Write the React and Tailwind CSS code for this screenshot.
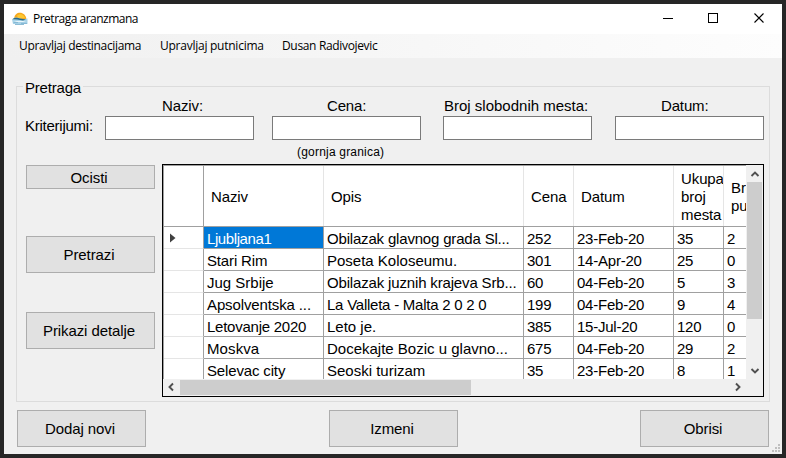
import React from "react";

const filters = [
  { label: "Naziv:", box: "ml-0", pad: "pl-[57px] tracking-[-0.1px]" },
  { label: "Cena:", box: "ml-[18px]", pad: "pl-[55px] tracking-[-0.15px]" },
  { label: "Broj slobodnih mesta:", box: "ml-[22px]", pad: "pl-[1px]" },
  { label: "Datum:", box: "ml-[23px]", pad: "pl-[46px] tracking-[-0.15px]" },
];

const columns = ["Naziv", "Opis", "Cena", "Datum", "Ukupan broj mesta", "Broj putnika"];

const rows = [
  { name: ["Ljubljana1", "tracking-[-0.4px]"], text: ["Obilazak glavnog grada Sl...", "tracking-[-0.18px]"], rest: ["252", "23-Feb-20", "35", "2"] },
  { name: ["Stari Rim", "tracking-[-0.15px]"], text: ["Poseta Koloseumu.", ""], rest: ["301", "14-Apr-20", "25", "0"] },
  { name: ["Jug Srbije", ""], text: ["Obilazak juznih krajeva Srb...", "tracking-[-0.16px]"], rest: ["60", "04-Feb-20", "5", "3"] },
  { name: ["Apsolventska ...", "tracking-[-0.12px]"], text: ["La Valleta - Malta 2 0 2 0", "tracking-[-0.24px]"], rest: ["199", "04-Feb-20", "9", "4"] },
  { name: ["Letovanje 2020", "tracking-[-0.25px]"], text: ["Leto je.", ""], rest: ["385", "15-Jul-20", "120", "0"] },
  { name: ["Moskva", "tracking-[0.1px]"], text: ["Docekajte Bozic u glavno...", ""], rest: ["675", "04-Feb-20", "29", "2"] },
  { name: ["Selevac city", "tracking-[-0.15px]"], text: ["Seoski turizam", ""], rest: ["35", "23-Feb-20", "8", "1"] },
];

const gridColumns = "grid grid-cols-[40px_120px_200px_50px_100px_50px_50px]";

function Button({ children, className }) {
  return (
    <button
      className={`flex w-[129px] items-center justify-center border border-[#adadad] bg-[#e1e1e1] pr-[3px] tracking-[-0.1px] ${className}`}
    >
      {children}
    </button>
  );
}

function Logo() {
  return (
    <svg width="16" height="14" viewBox="0 0 16 14" className="block">
      <path d="M2 7C2.5 2.5 5 .8 8 .8S13.8 3 14.4 7Z" fill="#f6a81c" />
      <path d="M5 3.8C6.5 1.8 10 1.6 12 4L13 6H6Z" fill="#fdc832" />
      <path d="M0 7.5C2 5.4 5 5.2 7.5 6.2S12 7.2 15.5 6.4V12H1Z" fill="#a9d3e8" />
      <path d="M.5 7.2C3 5.2 6 5.6 8 6.6L14 7.6 11 8.4 5 7.4Z" fill="#2b6a84" />
      <path d="M2 9H11L14 10H5Z" fill="#eaf6fb" />
      <path d="M1.5 10.6H6M9 11.4h6M3 12.5h9" stroke="#7fb4d0" strokeWidth=".9" />
    </svg>
  );
}

function Arrow({ d, className }) {
  return (
    <svg width="16" height="16" viewBox="0 0 16 16" className={`block shrink-0 ${className}`}>
      <path d={d} fill="none" stroke="#505050" strokeWidth="1.9" />
    </svg>
  );
}

function TitleBar() {
  return (
    <div className="flex h-[30px] items-center bg-white pl-2 font-['Open_Sans','Noto_Sans',sans-serif] text-[12px]">
      <Logo />
      <span className="ml-[5px] tracking-[-0.5px]">Pretraga aranzmana</span>
      <svg width="119" height="30" viewBox="0 0 119 30" className="ml-auto block" shapeRendering="crispEdges">
        <path d="M0 14.5h10M45.5 9.5h9v9h-9z" fill="none" stroke="#000" />
        <path d="M91.5 9.5l9 9M100.5 9.5l-9 9" stroke="#000" strokeWidth="1.1" shapeRendering="auto" />
      </svg>
    </div>
  );
}

function MenuBar() {
  return (
    <div className="flex h-6 items-center bg-linear-to-r from-[#f0f0f0] to-[#fdfdfd] pl-[15px] font-['Open_Sans','Noto_Sans',sans-serif] text-[12px] tracking-[-0.34px]">
      <span className="w-[141px] whitespace-nowrap">Upravljaj destinacijama</span>
      <span className="w-[122px] tracking-[-0.25px] whitespace-nowrap">Upravljaj putnicima</span>
      <span className="whitespace-nowrap">Dusan Radivojevic</span>
    </div>
  );
}

function Cell({ children, className }) {
  return (
    <div
      className={`overflow-hidden border-r border-b border-[#a0a0a0] pl-[3px] leading-[23px] whitespace-nowrap ${className}`}
    >
      {children}
    </div>
  );
}

function DataGrid() {
  return (
    <div className="ml-[7px] flex h-[233px] w-[602px] flex-col border border-black bg-[#f0f0f0]">
      <div className="flex h-[214px]">
        <div className="h-[214px] w-[583px] overflow-hidden border-t border-l border-[#a0a0a0] bg-white">
          <div className={`${gridColumns} h-[61px] w-[610px] border-b border-[#a0a0a0]`}>
            <div className="border-r border-[#a0a0a0]" />
            {columns.map((c, i) => (
              <div
                key={c}
                className="flex items-center overflow-hidden border-r border-[#e5e5e5] pt-[2px] pl-[7px] leading-[18px] tracking-[-0.1px]"
              >
                {i === 4 ? (
                  <span>
                    Ukupan
                    <br />
                    broj
                    <br />
                    mesta
                  </span>
                ) : i === 5 ? (
                  <span>
                    Broj
                    <br />
                    putnika
                  </span>
                ) : (
                  c
                )}
              </div>
            ))}
          </div>
          {rows.map((r, ri) => (
            <div key={r.name[0]} className={`${gridColumns} h-[22px] w-[610px]`}>
              <div className="flex items-center border-r border-b border-r-[#a0a0a0] border-b-[#e5e5e5] pl-[6px]">
                {ri === 0 && (
                  <svg width="6" height="10" viewBox="0 0 6 10">
                    <path d="M0 .5v9L5.5 5z" fill="#404040" />
                  </svg>
                )}
              </div>
              <Cell className={`${r.name[1]} ${ri === 0 ? "bg-[#0078d7] text-white" : ""}`}>{r.name[0]}</Cell>
              <Cell className={r.text[1]}>{r.text[0]}</Cell>
              {r.rest.map((v, i) => (
                <Cell key={i} className="tracking-[-0.23px]">
                  {v}
                </Cell>
              ))}
            </div>
          ))}
        </div>
        <div className="flex w-[17px] flex-col items-center">
          <Arrow d="M4.5 10.5L8 7l3.5 3.5" className="h-[17px]" />
          <div className="h-[137px] w-[15px] bg-[#cdcdcd]" />
          <Arrow d="M4.5 6L8 9.5 11.5 6" className="mt-auto" />
        </div>
      </div>
      <div className="flex h-[17px] items-center pb-[1px]">
        <Arrow d="M10 4.5L6.5 8l3.5 3.5" className="" />
        <div className="ml-px h-[15px] w-[291px] bg-[#cdcdcd]" />
        <Arrow d="M6 4.5L9.5 8 6 11.5" className="mr-[17px] ml-auto" />
      </div>
    </div>
  );
}

function SizeGrip() {
  return (
    <svg width="8" height="8" viewBox="0 0 8 8" className="block" shapeRendering="crispEdges">
      <path d="M6 0h2v2h-2zM3 3h2v2h-2zM6 3h2v2h-2zM0 6h2v2h-2zM3 6h2v2h-2zM6 6h2v2h-2z" fill="#bfbfbf" />
    </svg>
  );
}

export default function App() {
  return (
    <div className="h-[458px] w-[786px] overflow-hidden bg-[#262626] p-1 font-['Liberation_Sans',sans-serif] text-[15px] text-black">
      <div className="flex h-[450px] w-[778px] flex-col bg-[#f0f0f0]">
        <TitleBar />
        <MenuBar />
        <fieldset className="mt-[18px] ml-3 h-[326px] w-[754px] border border-[#dcdcdc]">
          <legend className="ml-[6px] h-[21px] px-[2px] leading-[23px] tracking-[-0.2px]">Pretraga</legend>
          <div className="flex h-[43px]">
            <div className="w-[88px] pt-[18px] pl-[8px] leading-[21px] tracking-[-0.25px]">Kriterijumi:</div>
            {filters.map((f) => (
              <label key={f.label} className={`block w-[149px] ${f.box}`}>
                <span className={`block h-[19px] leading-[17px] whitespace-nowrap ${f.pad}`}>{f.label}</span>
                <input className="block h-6 w-[149px] border border-[#7a7a7a] bg-white" />
              </label>
            ))}
          </div>
          <div className="h-6 pt-[3px] pl-[280px] text-[12px] leading-[18px] tracking-[0.2px]">(gornja granica)</div>
          <div className="flex pl-[9px]">
            <div className="flex flex-col pt-px">
              <Button className="h-6 pt-[2px]">Ocisti</Button>
              <Button className="mt-[47px] h-[37px] pt-px">Pretrazi</Button>
              <Button className="mt-[39px] h-[37px] pt-px">Prikazi detalje</Button>
            </div>
            <DataGrid />
          </div>
        </fieldset>
        <div className="mt-2 flex h-[44px] pl-[13px]">
          <Button className="h-[37px] pt-px">Dodaj novi</Button>
          <Button className="ml-[183px] h-[37px] pt-px">Izmeni</Button>
          <Button className="ml-[182px] h-[37px] pt-px">Obrisi</Button>
          <div className="mt-auto ml-[3px] pb-[2px]">
            <SizeGrip />
          </div>
        </div>
      </div>
    </div>
  );
}
